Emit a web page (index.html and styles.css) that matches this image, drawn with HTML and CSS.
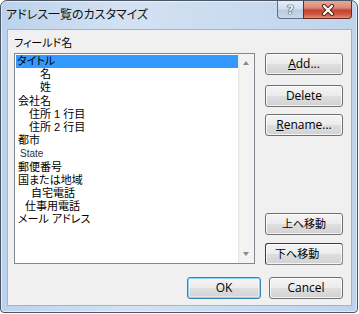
FILE: index.html
```html
<!DOCTYPE html>
<html lang="ja">
<head>
<meta charset="utf-8">
<title>アドレス一覧のカスタマイズ</title>
<link rel="stylesheet" href="styles.css">
</head>
<body>
<div class="window">
  <div class="titlebar">
    <span class="title">アドレス一覧のカスタマイズ</span>
    <div class="caption-btns">
      <div class="cap help"><span>?</span></div>
      <div class="cap close">
        <svg width="14" height="12" viewBox="0 0 14 12">
          <path d="M3 2 L11 10 M11 2 L3 10" stroke="#4a2018" stroke-width="4" stroke-linecap="round"/>
          <path d="M3 2 L11 10 M11 2 L3 10" stroke="#ffffff" stroke-width="2.2" stroke-linecap="round"/>
        </svg>
      </div>
    </div>
  </div>
  <div class="client">
    <div class="main">
      <div class="left">
        <div class="label">フィールド名</div>
        <div class="list">
          <div class="items">
            <div class="row sel ind-1">タイトル</div>
            <div class="row ind-24">名</div>
            <div class="row ind-24">姓</div>
            <div class="row ind-2">会社名</div>
            <div class="row ind-13">住所 1 行目</div>
            <div class="row ind-13">住所 2 行目</div>
            <div class="row ind-2">都市</div>
            <div class="row ind-4 latin">State</div>
            <div class="row ind-2">郵便番号</div>
            <div class="row ind-2">国または地域</div>
            <div class="row ind-15">自宅電話</div>
            <div class="row ind-9">仕事用電話</div>
            <div class="row ind-2">メール アドレス</div>
          </div>
          <div class="scrollbar">
            <div class="arrow up"></div>
            <div class="arrow down"></div>
          </div>
        </div>
      </div>
      <div class="right">
        <div class="btn btn-add"><u>A</u>dd...</div>
        <div class="btn btn-delete">Delete</div>
        <div class="btn btn-rename"><u>R</u>ename...</div>
        <div class="btn jp btn-up">上へ移動</div>
        <div class="btn jp btn-down">下へ移動</div>
      </div>
    </div>
    <div class="footer">
      <div class="btn btn-ok">OK</div>
      <div class="btn btn-cancel">Cancel</div>
    </div>
  </div>
</div>
</body>
</html>
```
FILE: styles.css
```css
html, body {
  margin: 0;
  padding: 0;
  background: #ffffff;
}
body {
  font-family: "Liberation Sans", "Noto Sans CJK JP", sans-serif;
  font-feature-settings: "palt";
  color: #000;
}
.window {
  box-sizing: border-box;
  width: 358px;
  height: 313px;
  border: 1px solid #4b5563;
  border-radius: 7px 7px 4px 4px;
  background: linear-gradient(to right, #bcd2ec 0%, #d3e2f3 35%, #c8daef 70%, #bfd4ec 100%);
  box-shadow: inset 0 0 0 1px rgba(255,255,255,0.55);
  display: flex;
  flex-direction: column;
}
.titlebar {
  height: 28px;
  display: flex;
  justify-content: space-between;
  align-items: flex-start;
  padding: 0 5px 0 5px;
}
.title {
  font-size: 12px;
  line-height: 28px;
  color: #101010;
}
.caption-btns {
  display: flex;
}
.cap {
  height: 18px;
  box-sizing: border-box;
  border: 1px solid #5f6f86;
  border-top: none;
  display: flex;
  align-items: center;
  justify-content: center;
}
.help {
  width: 26px;
  border-radius: 0 0 0 4px;
  border-right: none;
  background: linear-gradient(to bottom, #e6eef8 0%, #d2dff0 45%, #b9cbe2 55%, #c9d9ec 100%);
}
.help span {
  font-family: "DejaVu Sans", sans-serif;
  font-weight: bold;
  font-size: 12px;
  color: #f4f6f9;
  text-shadow: 0 0 1px #333, 0 0 1px #333, 0 0 1px #333;
  line-height: 16px;
}
.close {
  width: 49px;
  border-radius: 0 0 4px 0;
  border-color: #6a2a22;
  background: linear-gradient(to bottom, #e8a897 0%, #d98a78 40%, #c4442c 55%, #cf5a44 80%, #e0907c 100%);
}
.close svg {
  display: block;
}
.client {
  flex: 1;
  margin: 0 5px 6px 6px;
  border: 1px solid #a4b4c8;
  background: #f0f0f0;
  padding: 7px 8px 0 6px;
  display: flex;
  flex-direction: column;
}
.main {
  display: flex;
}
.left {
  width: 241px;
}
.label {
  height: 16px;
  font-size: 11px;
  line-height: 13px;
}
.list {
  box-sizing: border-box;
  height: 211px;
  border: 1px solid #828790;
  background: #ffffff;
  display: flex;
}
.items {
  flex: 1;
  padding: 1px 0 0 1px;
}
.row {
  height: 13.2px;
  font-size: 11px;
  line-height: 13.2px;
  white-space: nowrap;
}
.row.sel {
  background: #3399ff;
}
.row.latin {
  font-size: 10px;
  color: #333;
}
.ind-1 { padding-left: 1px; }
.ind-2 { padding-left: 2px; }
.ind-4 { padding-left: 4px; }
.ind-9 { padding-left: 9px; }
.ind-13 { padding-left: 13px; }
.ind-15 { padding-left: 15px; }
.ind-24 { padding-left: 24px; }
.scrollbar {
  width: 16px;
  background: linear-gradient(to right, #e4e4e4 0, #f3f3f3 2px, #f3f3f3 100%);
  display: flex;
  flex-direction: column;
  justify-content: space-between;
  align-items: center;
  padding: 7px 0 7px 0;
}
.arrow {
  width: 0;
  height: 0;
  border-left: 3.5px solid transparent;
  border-right: 3.5px solid transparent;
}
.arrow.up {
  border-bottom: 4px solid #8a8a8a;
}
.arrow.down {
  border-top: 4px solid #8a8a8a;
}
.right {
  width: 78px;
  margin-left: 10px;
  padding-top: 16px;
  display: flex;
  flex-direction: column;
}
.btn {
  box-sizing: border-box;
  height: 22px;
  border: 1px solid #707070;
  border-radius: 3px;
  background: linear-gradient(to bottom, #f4f4f4 0%, #ececec 48%, #dedede 52%, #d2d2d2 100%);
  box-shadow: inset 0 0 0 1px rgba(255,255,255,0.75);
  font-family: "Open Sans", "Noto Sans", sans-serif;
  font-feature-settings: normal;
  font-size: 12px;
  line-height: 20px;
  text-align: center;
  color: #000;
}
.btn.jp {
  font-family: "Liberation Sans", "Noto Sans CJK JP", sans-serif;
  font-feature-settings: "palt";
  font-size: 11px;
}
.btn-delete { margin-top: 10px; }
.btn-rename { margin-top: 7px; }
.btn-up { margin-top: 77px; }
.btn-down {
  margin-top: 8px;
  text-align: left;
  padding-left: 9px;
  border-color: #3c3c3c #8a8a8a #8a8a8a #3c3c3c;
}
.footer {
  display: flex;
  justify-content: flex-end;
  gap: 8px;
  margin-top: 12px;
}
.btn-ok, .btn-cancel {
  width: 74px;
}
.btn-ok {
  border-color: #3c7fb1;
  box-shadow: inset 0 0 0 1px #8fd3f5, inset 0 0 0 2px rgba(255,255,255,0.4);
}
```
